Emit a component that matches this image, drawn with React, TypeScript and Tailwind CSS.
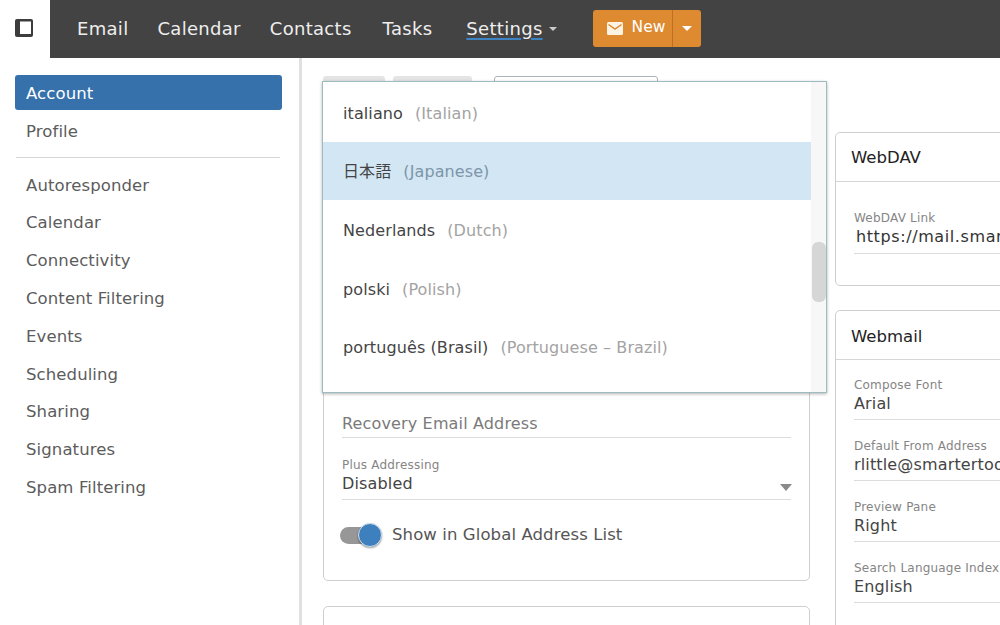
const NAV = ["Email", "Calendar", "Contacts"];
const SIDE = ["Autoresponder", "Calendar", "Connectivity", "Content Filtering", "Events", "Scheduling", "Sharing", "Signatures", "Spam Filtering"];
const LANGS = [
  { name: "italiano", en: "(Italian)" },
  { name: "日本語", en: "(Japanese)", active: true },
  { name: "Nederlands", en: "(Dutch)" },
  { name: "polski", en: "(Polish)" },
  { name: "português (Brasil)", en: "(Portuguese – Brazil)" },
];
const FONT = { fontFamily: '"DejaVu Sans", "Noto Sans CJK JP", sans-serif' };

function Caret({ className }: { className: string }) {
  return <span className={`inline-block w-0 h-0 border-x-transparent ${className}`} />;
}

function Field({ label, value }: { label: string; value: string }) {
  return (
    <div className="border-b border-[#dcdcdc] h-[45px] mb-[16px] pt-[3px] whitespace-nowrap">
      <div className="text-[12px] leading-[15px] tracking-[0.2px] text-[#858585]">{label}</div>
      <div className="text-[16px] leading-[21px] tracking-[0.15px] text-[#444]">{value}</div>
    </div>
  );
}

export default function App() {
  return (
    <div className="w-[1000px] h-[625px] overflow-hidden bg-white flex flex-col" style={FONT}>
      <header className="h-[58px] flex shrink-0">
        <div className="w-[50px] flex items-center pl-[15px]">
          <svg width="18" height="18" viewBox="0 0 18 18" className="mt-[-2px]">
            <rect width="18" height="18" rx="2" fill="#3d3d3d" />
            <rect x="5" y="2.5" width="11" height="12.5" fill="#fff" />
          </svg>
        </div>
        <nav className="flex-1 bg-[#434343] flex items-center pl-[27px] pb-[2px] text-[#eeeeee] text-[18px] tracking-[0.3px]">
          {NAV.map((n) => (
            <span key={n} className="mr-[29px]">{n}</span>
          ))}
          <span className="ml-[2px] mr-[34px]">Tasks</span>
          <span className="underline decoration-[#3d83c4] decoration-2 underline-offset-[3px]">Settings</span>
          <Caret className="border-x-[4px] border-t-[4px] border-t-[#cccccc] ml-[6px] mt-[2px]" />
          <div className="ml-[36px] h-[37px] w-[108px] rounded-[3px] bg-[#de8a30] flex items-center text-white text-[15.5px] tracking-normal">
            <div className="w-[80px] h-full flex items-center pl-[14px] border-r border-[#bd7120]">
              <svg width="16" height="13" viewBox="0 0 16 13" className="mr-[9px] shrink-0">
                <rect width="16" height="13" rx="1.5" fill="#fdf3e3" />
                <path d="M1.5 2.5 L8 7 L14.5 2.5" fill="none" stroke="#de8a30" strokeWidth="1.5" />
              </svg>
              New
            </div>
            <div className="flex-1 flex items-center justify-center">
              <Caret className="border-x-[5px] border-t-[5px] border-t-white" />
            </div>
          </div>
        </nav>
      </header>

      <div className="flex-1 flex min-h-0">
        <aside className="w-[302px] shrink-0 border-r-[3px] border-[#e0e0e0] pt-[17px] pl-[15px] pr-[17px] text-[16.5px] tracking-[0.1px] text-[#5c5c5c]">
          <div className="h-[35px] rounded-[3px] bg-[#3671ab] text-white flex items-center pl-[11px] pt-[3px]">Account</div>
          <div className="h-[41px] flex items-center pl-[11px] pt-[3px]">Profile</div>
          <div className="h-px bg-[#d6d6d6] ml-px mr-[2px] mt-[6px] mb-[9px]" />
          {SIDE.map((s) => (
            <div key={s} className="h-[37.8px] flex items-center pl-[11px]">{s}</div>
          ))}
        </aside>

        <main className="relative flex-1 min-w-0 overflow-hidden pl-[21px]">
          <div className="flex items-start gap-[25px]">
            <div className="w-[487px] shrink-0">
              <div className="flex h-[24px] mt-[18px] mb-[30px]">
                <div className="w-[62px] rounded-t-[3px] bg-[#e4e4e4]" />
                <div className="w-[79px] ml-[8px] rounded-t-[3px] bg-[#e4e4e4]" />
                <div className="w-[164px] ml-[22px] rounded-t-[3px] border border-[#a9b4bd]" />
              </div>
              <section className="h-[451px] rounded-[5px] border border-[#cfcfcf] flex flex-col justify-end px-[18px] pb-[29px]">
                <div className="h-[27px] border-b border-[#dcdcdc] text-[16px] leading-[22px] tracking-[0.15px] text-[#7a7a7a] mb-[17px] pt-[2px]">Recovery Email Address</div>
                <div className="relative">
                  <Field label="Plus Addressing" value="Disabled" />
                  <Caret className="absolute right-[-1px] top-[29px] border-x-[6px] border-t-[7px] border-t-[#8a8a8a]" />
                </div>
                <div className="flex items-center h-[30px] mt-[4px] mb-[1px]">
                  <div className="relative w-[40px] h-[17px] ml-[-2px] rounded-full bg-[#979797] mr-[12px] shrink-0">
                    <div className="absolute right-[-2px] top-[-4px] w-[24px] h-[24px] rounded-full bg-[#3e7fbd] border border-[#cfe0ef] shadow-[0_1px_2px_rgba(0,0,0,0.4)]" />
                  </div>
                  <span className="text-[16.5px] tracking-[0.1px] text-[#555] whitespace-nowrap">Show in Global Address List</span>
                </div>
              </section>
              <section className="h-[60px] mt-[25px] rounded-[5px] border border-[#cfcfcf]" />
            </div>

            <div className="w-[300px] shrink-0 pt-[74px]">
              <section className="h-[154px] rounded-[5px] border border-[#cfcfcf] whitespace-nowrap overflow-hidden">
                <div className="h-[49px] border-b border-[#d6d6d6] flex items-center pl-[15px] pt-[2px] text-[16.5px] text-[#222]">WebDAV</div>
                <div className="px-[18px] pt-[29px]">
                  <div className="text-[12px] leading-[15px] tracking-[0.2px] text-[#858585]">WebDAV Link</div>
                  <div className="h-[28px] border-b border-[#dcdcdc] text-[16px] leading-[22px] text-[#333] tracking-[0.6px] pl-[2px]">https://mail.smartertools.com</div>
                </div>
              </section>
              <section className="mt-[24px] rounded-[5px] border border-[#cfcfcf] whitespace-nowrap overflow-hidden h-[340px]">
                <div className="h-[49px] border-b border-[#d6d6d6] flex items-center pl-[15px] pt-[4px] text-[16.5px] text-[#222]">Webmail</div>
                <div className="px-[18px] pt-[15px]">
                  <Field label="Compose Font" value="Arial" />
                  <Field label="Default From Address" value="rlittle@smartertools.com" />
                  <Field label="Preview Pane" value="Right" />
                  <Field label="Search Language Index" value="English" />
                </div>
              </section>
            </div>
          </div>

          {/* language dropdown */}
          <div className="absolute left-[20px] top-[23px] w-[505px] h-[312px] bg-white border border-[#9dbcc0] shadow-[0_1px_3px_rgba(0,0,0,0.3)] flex">
            <div className="w-[488px] shrink-0 pt-[1px]">
              {LANGS.map((l) => (
                <div key={l.name} className={`h-[58.6px] flex items-center pl-[20px] pt-[3px] text-[16px] tracking-[0.1px] ${l.active ? "bg-[#d2e6f4]" : ""}`}>
                  <span className="text-[#444] mr-[12px]">{l.name}</span>
                  <span className={l.active ? "text-[#7d95a8]" : "text-[#a3a3a3]"}>{l.en}</span>
                </div>
              ))}
            </div>
            <div className="flex-1 bg-[#f7f7f7] relative">
              <div className="absolute left-[1px] top-[160px] w-[14px] h-[60px] rounded-[6px] bg-[#d6d6d6]" />
            </div>
          </div>
        </main>
      </div>
    </div>
  );
}
